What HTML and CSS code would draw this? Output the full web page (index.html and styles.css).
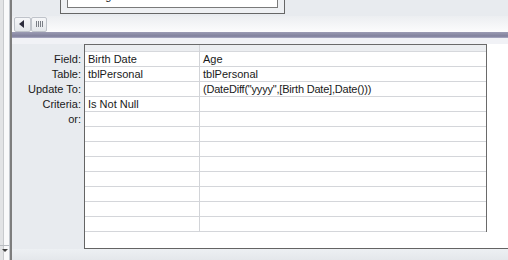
FILE: index.html
```html
<!DOCTYPE html>
<html lang="en">
<head>
  <meta charset="UTF-8" />
  <title>Update Query - Design View</title>
  <link rel="stylesheet" href="styles.css">
</head>
<body>
  <div class="app">

    <!-- Navigation pane edge -->
    <div class="nav-strip">
      <div class="nav-combo"><span class="combo-arrow"></span></div>
    </div>

    <div class="main">
      <!-- Table area -->
      <div class="table-pane">
        <div class="field-list">
          <div class="field-list-inner">
            <div class="field-name">Age</div>
          </div>
        </div>
      </div>

      <!-- Horizontal scroll bar -->
      <div class="hscroll">
        <div class="scroll-btn"><span class="arrow-left"></span></div>
        <div class="scroll-thumb">
          <span class="grip"></span><span class="grip"></span><span class="grip"></span><span class="grip"></span>
        </div>
      </div>

      <!-- Splitter -->
      <div class="splitter"></div>
      <div class="splitter-gap"></div>

      <!-- Design grid -->
      <div class="design-grid">
        <div class="row-labels">
          <div class="row-label">Field:</div>
          <div class="row-label">Table:</div>
          <div class="row-label">Update To:</div>
          <div class="row-label">Criteria:</div>
          <div class="row-label">or:</div>
        </div>
        <div class="grid-panel">
          <div class="grid-cols">
            <div class="grid-col col-first">
              <div class="col-head"></div>
              <div class="cell">Birth Date</div>
              <div class="cell">tblPersonal</div>
              <div class="cell"></div>
              <div class="cell">Is Not Null</div>
              <div class="cell"></div>
              <div class="cell"></div>
              <div class="cell"></div>
              <div class="cell"></div>
              <div class="cell"></div>
              <div class="cell"></div>
              <div class="cell"></div>
              <div class="cell"></div>
            </div>
            <div class="grid-col col-second">
              <div class="col-head"></div>
              <div class="cell">Age</div>
              <div class="cell">tblPersonal</div>
              <div class="cell formula">(DateDiff("yyyy",[Birth Date],Date()))</div>
              <div class="cell"></div>
              <div class="cell"></div>
              <div class="cell"></div>
              <div class="cell"></div>
              <div class="cell"></div>
              <div class="cell"></div>
              <div class="cell"></div>
              <div class="cell"></div>
              <div class="cell"></div>
            </div>
          </div>
        </div>
      </div>

      <div class="bottom-band"></div>
    </div>
  </div>
</body>
</html>
```

FILE: styles.css
```css
body {
  margin: 0;
  font-family: "Liberation Sans", Arial, sans-serif;
  font-size: 11px;
  color: #1a1a1a;
  background-color: #e9ecf0;
}

.app {
  display: flex;
  width: 508px;
  height: 260px;
  overflow: hidden;
}

/* Left edge of the navigation pane */
.nav-strip {
  width: 9px;
  flex-shrink: 0;
  display: flex;
  flex-direction: column;
  justify-content: flex-end;
  background: linear-gradient(to right, #e2e3e5 0 3px, #c8cacd 3px 4px, #f9f9fa 4px);
  border-right: 1px solid #c4c8ce;
}

.nav-combo {
  height: 15px;
  border-top: 1px solid #b9bcc1;
  padding: 3px 0 0 2px;
  box-sizing: border-box;
}

.combo-arrow {
  display: block;
  width: 0;
  height: 0;
  border-left: 3px solid transparent;
  border-right: 3px solid transparent;
  border-top: 3px solid #404040;
}

.main {
  flex: 1;
  display: flex;
  flex-direction: column;
  border-left: 2px solid #7d7d7d;
  min-width: 0;
}

/* Table pane */
.table-pane {
  height: 16px;
  background-color: #e8ebef;
  overflow: hidden;
}

.field-list {
  width: 225px;
  height: 30px;
  margin-top: -16px;
  margin-left: 48px;
  box-sizing: border-box;
  border: 1px solid #666;
  padding: 0 6px 5px 6px;
  background-color: #eef0f3;
}

.field-list-inner {
  height: 100%;
  box-sizing: border-box;
  border: 1px solid #7a7a7a;
  border-top: none;
  background-color: #fff;
  padding: 4px 0 0 30px;
}

.field-name {
  line-height: 15px;
}

/* Scroll bar */
.hscroll {
  height: 16px;
  display: flex;
  align-items: center;
  padding-left: 2px;
  background: linear-gradient(#eceef1, #fcfcfd);
}

.scroll-btn,
.scroll-thumb {
  height: 15px;
  box-sizing: border-box;
  border: 1px solid #bfc3ca;
  border-radius: 2px;
  background: linear-gradient(#f6f7f9, #e3e6ea);
  display: flex;
  align-items: center;
  justify-content: center;
}

.scroll-btn {
  width: 17px;
}

.scroll-thumb {
  width: 16px;
  gap: 1px;
}

.arrow-left {
  width: 0;
  height: 0;
  border-top: 4px solid transparent;
  border-bottom: 4px solid transparent;
  border-right: 5px solid #2c2c3c;
  margin-right: 2px;
}

.grip {
  width: 1px;
  height: 6px;
  background-color: #7a7e86;
}

/* Splitter */
.splitter {
  height: 6px;
  background: linear-gradient(#9c9cb4, #80809c 70%, #aeaec6);
}

.splitter-gap {
  height: 6px;
  background-color: #f1f2f6;
}

/* Design grid */
.design-grid {
  display: flex;
  height: 205px;
}

.row-labels {
  width: 72px;
  flex-shrink: 0;
  padding-top: 8px;
  background-color: #e8ebef;
}

.row-label {
  height: 15px;
  line-height: 14px;
  text-align: right;
  padding-right: 3px;
}

.grid-panel {
  flex: 1;
  background-color: #fff;
  border-left: 1px solid #646464;
  border-bottom: 1px solid #646464;
  overflow: hidden;
}

.grid-cols {
  display: flex;
  align-items: flex-start;
  width: 402px;
  box-sizing: border-box;
  border-top: 1px solid #6a6a6a;
  border-right: 1px solid #6a6a6a;
}

.grid-col {
  display: flex;
  flex-direction: column;
}

.col-first {
  width: 115px;
  border-right: 1px solid #d2d4d8;
  box-sizing: border-box;
}

.col-second {
  flex: 1;
}

.col-head {
  height: 6px;
  background-color: #eceef1;
  border-bottom: 1px solid #d6d8dc;
}

.cell {
  height: 14px;
  line-height: 14px;
  padding-left: 3px;
  border-bottom: 1px solid #d4d6da;
  white-space: nowrap;
}

.formula {
  letter-spacing: -0.2px;
}

.bottom-band {
  flex: 1;
  background: linear-gradient(#edf0f3, #e4e7eb);
}
```
